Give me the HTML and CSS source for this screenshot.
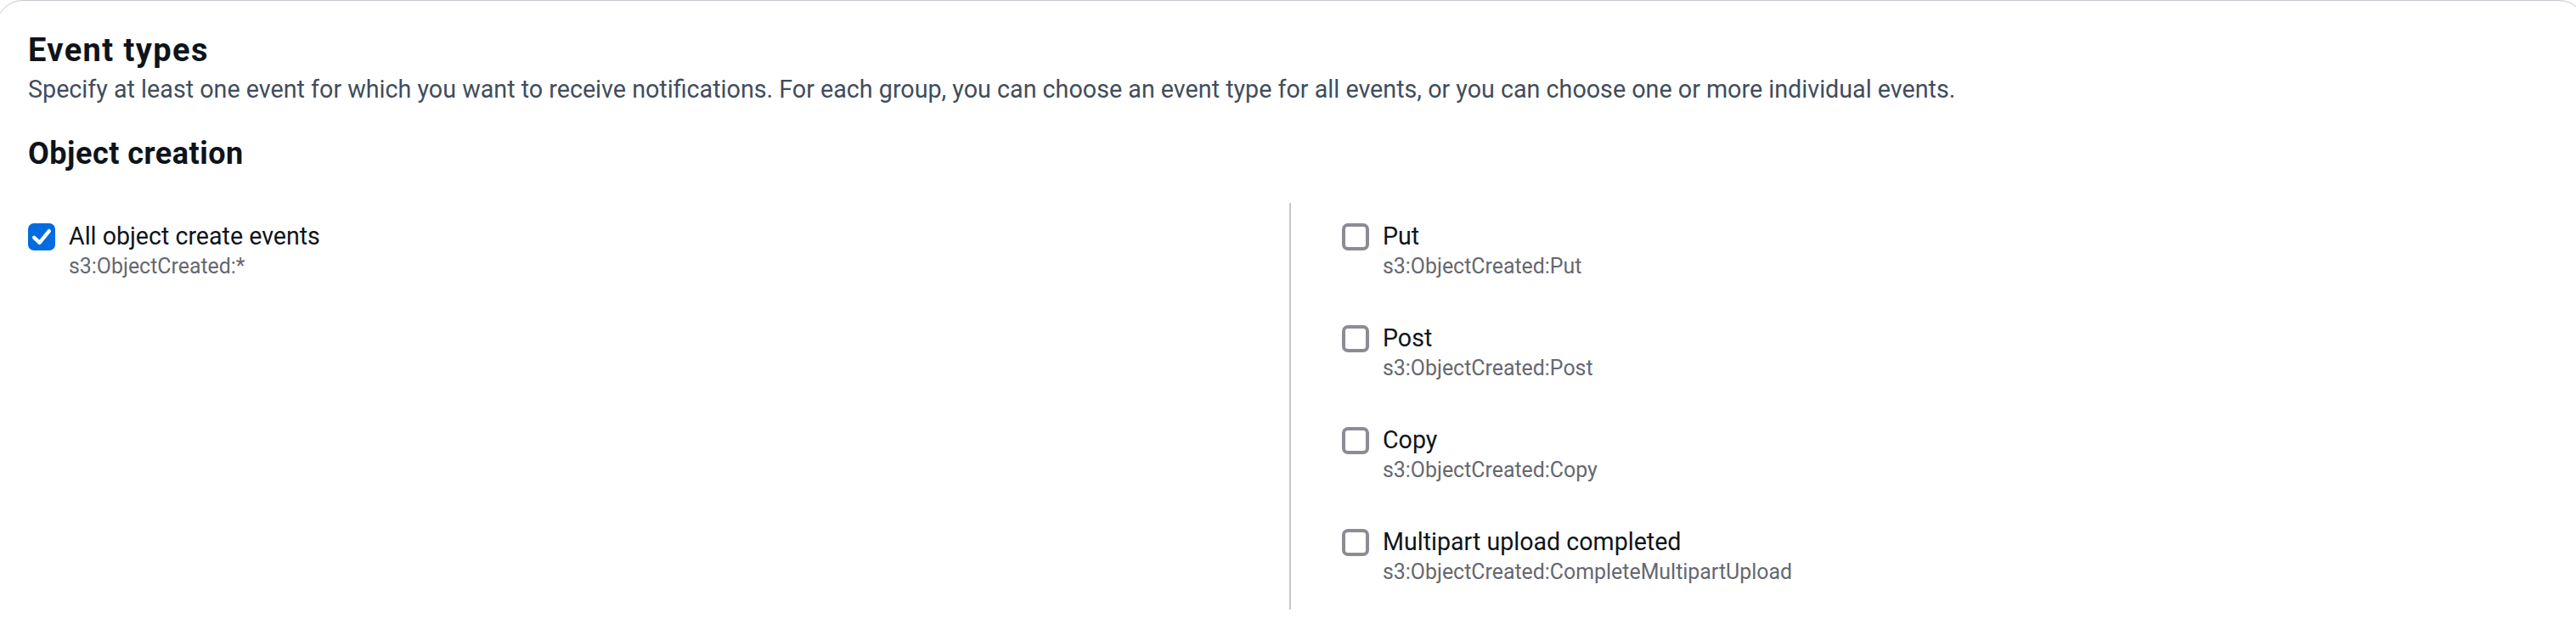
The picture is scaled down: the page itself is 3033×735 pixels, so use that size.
FILE: index.html
```html
<!DOCTYPE html>
<html lang="en">
<head>
<meta charset="utf-8">
<title>Event types</title>
<link rel="stylesheet" href="styles.css">
</head>
<body>
<div class="card">
  <div class="header">
    <h2 class="title">Event types</h2>
    <p class="lead">Specify at least one event for which you want to receive notifications. For each group, you can choose an event type for all events, or you can choose one or more individual events.</p>
  </div>
  <h3 class="subtitle">Object creation</h3>
  <div class="cols">
    <div class="col">
      <label class="option">
        <span class="box checked"><svg viewBox="0 0 16 16" width="32" height="32"><polyline points="3.6,8.4 6.8,11.4 12.4,4.6" fill="none" stroke="#fff" stroke-width="2.2" stroke-linecap="round" stroke-linejoin="round"/></svg></span>
        <span class="text"><span class="label">All object create events</span><span class="desc">s3:ObjectCreated:*</span></span>
      </label>
    </div>
    <div class="col col-right">
      <label class="option">
        <span class="box"></span>
        <span class="text"><span class="label">Put</span><span class="desc">s3:ObjectCreated:Put</span></span>
      </label>
      <label class="option">
        <span class="box"></span>
        <span class="text"><span class="label">Post</span><span class="desc">s3:ObjectCreated:Post</span></span>
      </label>
      <label class="option">
        <span class="box"></span>
        <span class="text"><span class="label">Copy</span><span class="desc">s3:ObjectCreated:Copy</span></span>
      </label>
      <label class="option">
        <span class="box"></span>
        <span class="text"><span class="label">Multipart upload completed</span><span class="desc">s3:ObjectCreated:CompleteMultipartUpload</span></span>
      </label>
    </div>
  </div>
</div>
</body>
</html>
```

FILE: styles.css
```css
html, body {
  margin: 0;
  padding: 0;
  background: #ffffff;
}
body {
  font-family: Roboto, "Liberation Sans", Arial, sans-serif;
  color: #0f141a;
  overflow: hidden;
}
.card {
  box-sizing: border-box;
  margin-left: -5px;
  width: 3050px;
  min-height: 800px;
  border: 1px solid #c6c6cd;
  border-radius: 32px;
  padding: 36px 37px 0 37px;
  background: #fff;
}
.title {
  margin: 0;
  font-size: 38px;
  line-height: 44px;
  letter-spacing: 1.4px;
  font-weight: 700;
  color: #0f141a;
}
.lead {
  margin: 4px 0 0 0;
  font-size: 28.7px;
  line-height: 40px;
  color: #414d5c;
}
.subtitle {
  margin: 34px 0 0 0;
  font-size: 36px;
  line-height: 44px;
  letter-spacing: 0.5px;
  font-weight: 700;
  color: #0f141a;
}
.cols {
  margin-top: 36px;
  display: grid;
  grid-template-columns: 1485px 1fr;
}
.col {
  padding-top: 19px;
  padding-bottom: 28px;
  display: flex;
  flex-direction: column;
  gap: 48px;
}
.col-right {
  border-left: 2px solid #c6c6cd;
  padding-left: 60px;
}
.option {
  display: flex;
  align-items: flex-start;
  gap: 16px;
}
.box {
  box-sizing: border-box;
  flex: none;
  width: 32px;
  height: 32px;
  margin-top: 5px;
  border: 4px solid #8c8c94;
  border-radius: 7px;
  background: #fff;
}
.box.checked {
  border: none;
  background: #006ce0;
}
.box svg {
  display: block;
}
.text {
  display: flex;
  flex-direction: column;
}
.label {
  font-size: 28.6px;
  line-height: 40px;
  color: #0f141a;
}
.desc {
  font-size: 24.9px;
  line-height: 32px;
  color: #656871;
}
```
